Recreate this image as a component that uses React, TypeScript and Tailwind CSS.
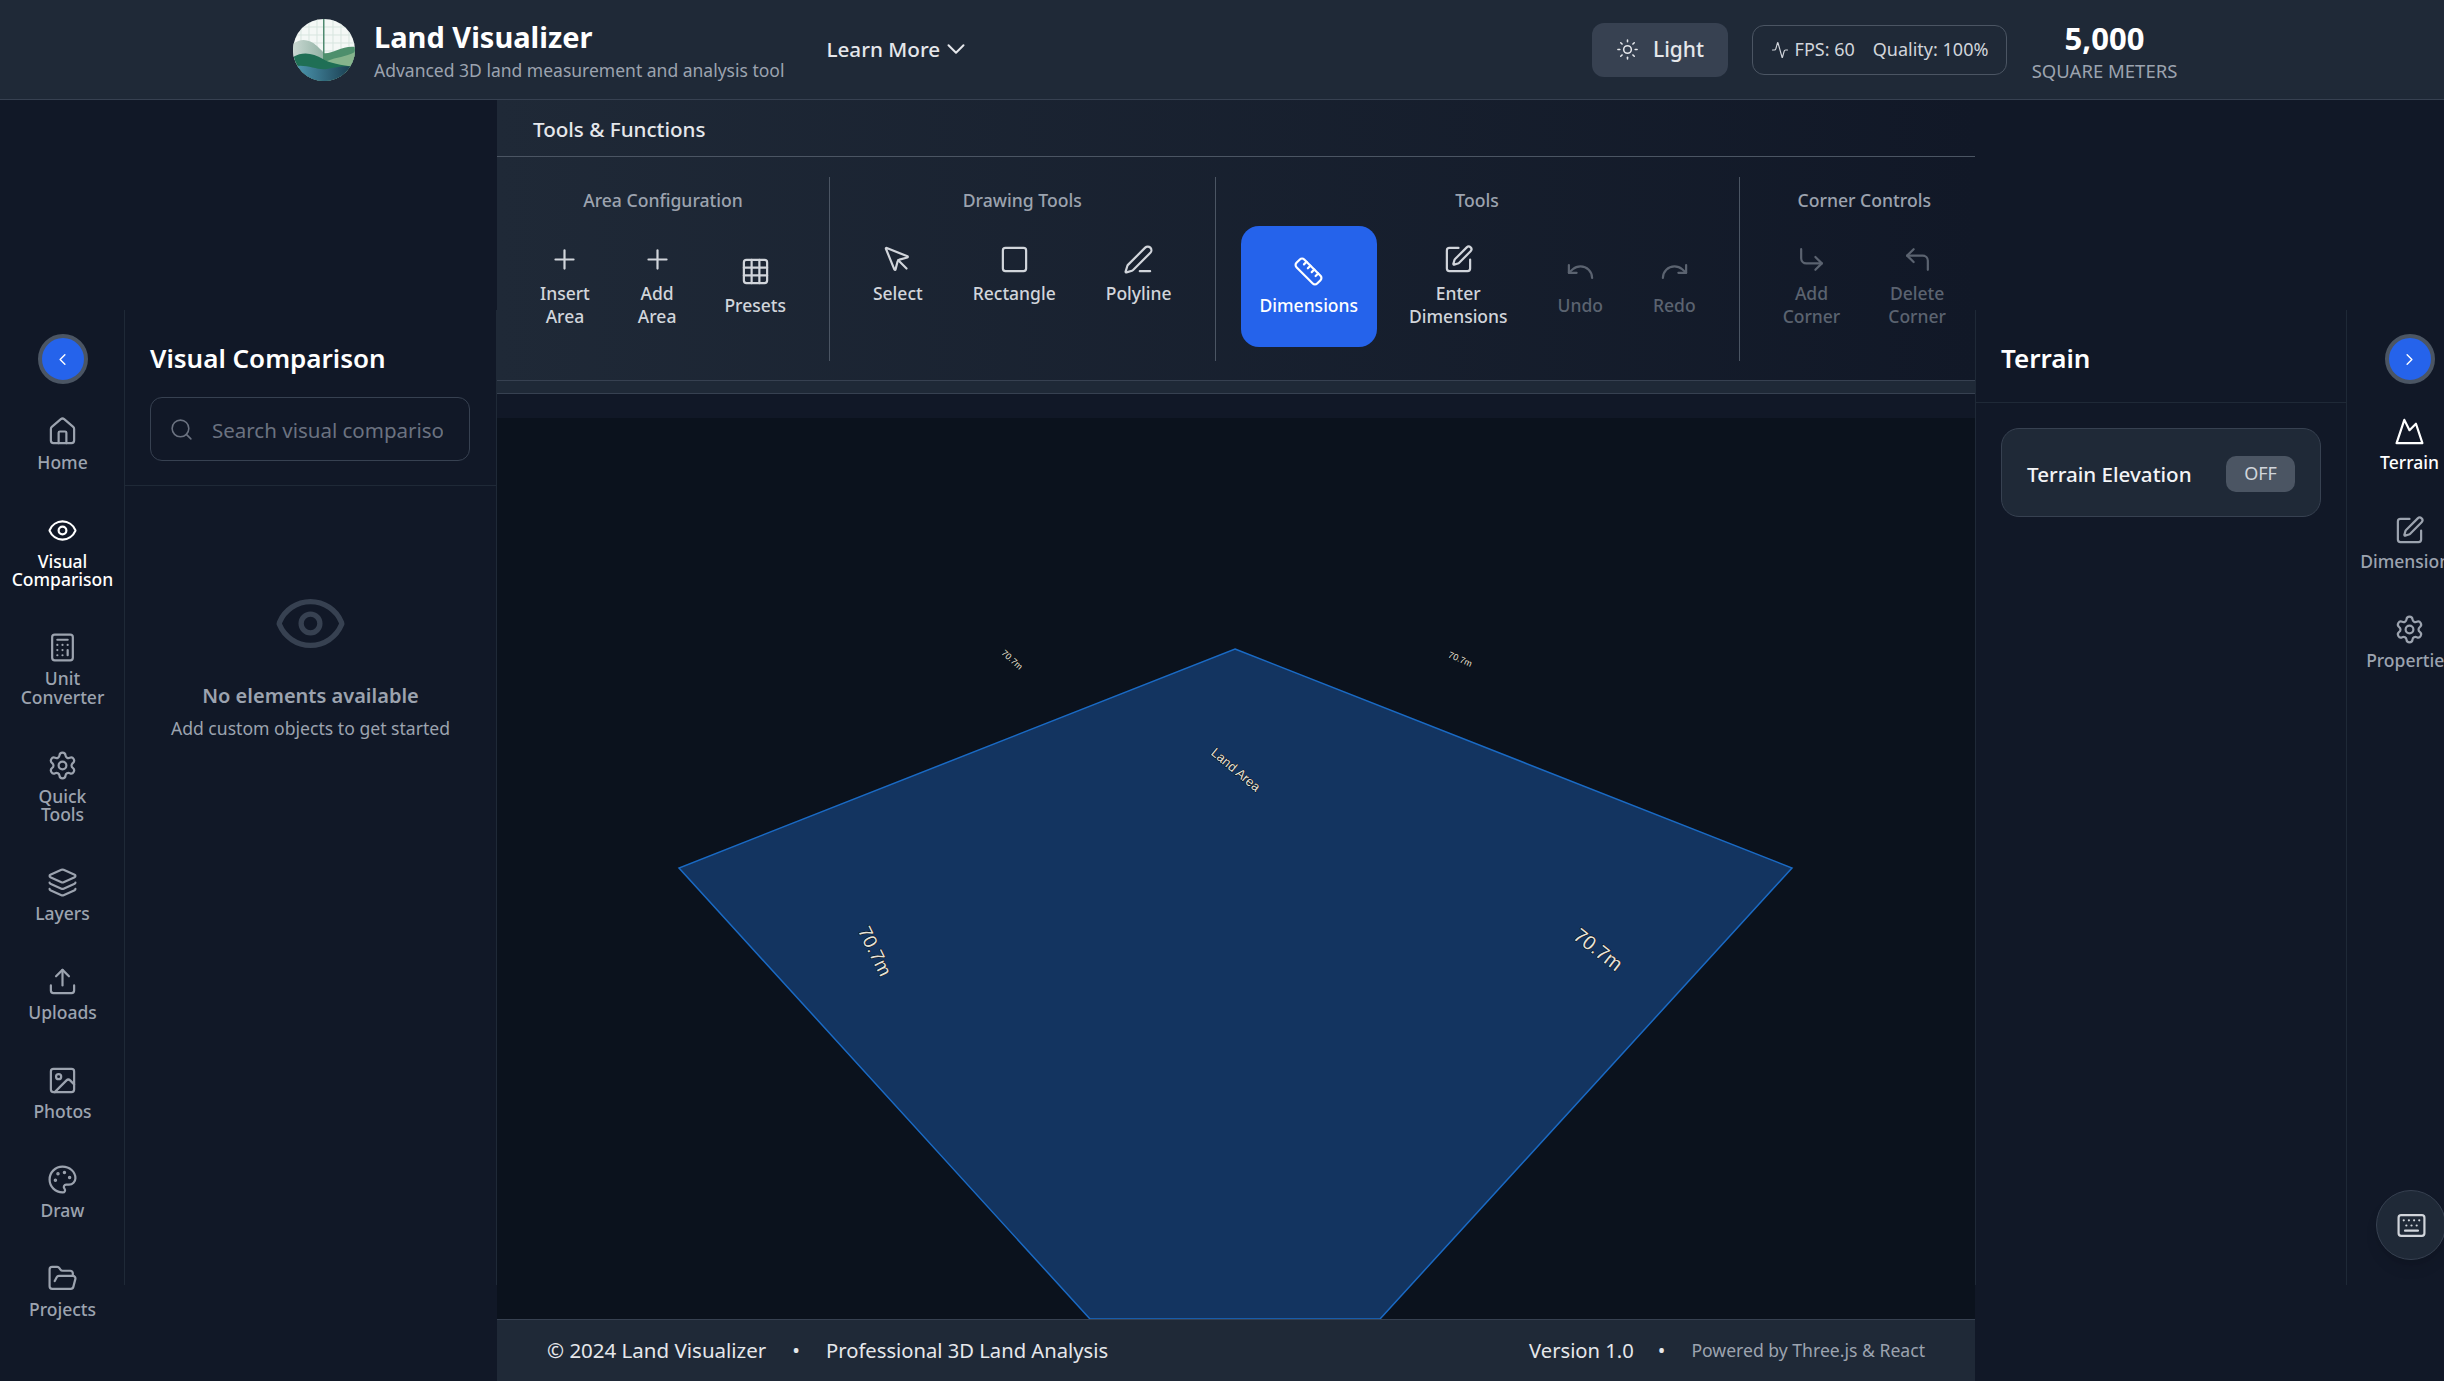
import {
  Activity,
  Calculator,
  ChevronDown,
  ChevronLeft,
  ChevronRight,
  CornerDownRight,
  CornerUpLeft,
  Eye,
  FolderOpen,
  Grid3x3,
  House,
  Image,
  Keyboard,
  Layers,
  Mountain,
  MousePointer,
  Palette,
  PenLine,
  Plus,
  Redo,
  Ruler,
  Search,
  Settings,
  Square,
  SquarePen,
  Sun,
  Undo,
  Upload,
} from "lucide-react";
import type { ComponentType } from "react";

type IconType = ComponentType<{ className?: string; size?: number; strokeWidth?: number }>;

interface RailItem {
  icon: IconType;
  lines: string[];
  active?: boolean;
}

interface ToolItem {
  icon: IconType;
  lines: string[];
  active?: boolean;
  disabled?: boolean;
  reserve?: boolean;
}

const leftRail: RailItem[] = [
  { icon: House, lines: ["Home"] },
  { icon: Eye, lines: ["Visual", "Comparison"], active: true },
  { icon: Calculator, lines: ["Unit", "Converter"] },
  { icon: Settings, lines: ["Quick", "Tools"] },
  { icon: Layers, lines: ["Layers"] },
  { icon: Upload, lines: ["Uploads"] },
  { icon: Image, lines: ["Photos"] },
  { icon: Palette, lines: ["Draw"] },
  { icon: FolderOpen, lines: ["Projects"] },
];

const rightRail: RailItem[] = [
  { icon: Mountain, lines: ["Terrain"], active: true },
  { icon: SquarePen, lines: ["Dimensions"] },
  { icon: Settings, lines: ["Properties"] },
];

const toolGroups: { title: string; gap: string; items: ToolItem[] }[] = [
  {
    title: "Area Configuration",
    gap: "gap-3",
    items: [
      { icon: Plus, lines: ["Insert", "Area"] },
      { icon: Plus, lines: ["Add", "Area"] },
      { icon: Grid3x3, lines: ["Presets"] },
    ],
  },
  {
    title: "Drawing Tools",
    gap: "gap-[14px]",
    items: [
      { icon: MousePointer, lines: ["Select"], reserve: true },
      { icon: Square, lines: ["Rectangle"], reserve: true },
      { icon: PenLine, lines: ["Polyline"], reserve: true },
    ],
  },
  {
    title: "Tools",
    gap: "gap-[14px]",
    items: [
      { icon: Ruler, lines: ["Dimensions"], active: true },
      { icon: SquarePen, lines: ["Enter", "Dimensions"] },
      { icon: Undo, lines: ["Undo"], disabled: true },
      { icon: Redo, lines: ["Redo"], disabled: true },
    ],
  },
  {
    title: "Corner Controls",
    gap: "gap-3",
    items: [
      { icon: CornerDownRight, lines: ["Add", "Corner"], disabled: true },
      { icon: CornerUpLeft, lines: ["Delete", "Corner"], disabled: true },
    ],
  },
];

function Logo() {
  return (
    <svg width="62" height="62" viewBox="0 0 62 62" className="shrink-0">
      <defs>
        <clipPath id="logoClip">
          <circle cx="31" cy="31" r="31" />
        </clipPath>
        <linearGradient id="logoBack" x1="0" x2="1">
          <stop offset="0" stopColor="#c9d8d2" />
          <stop offset="1" stopColor="#8fb0a2" />
        </linearGradient>
        <linearGradient id="logoWater" x1="0" x2="1">
          <stop offset="0" stopColor="#4f9cb5" />
          <stop offset="1" stopColor="#17384a" />
        </linearGradient>
      </defs>
      <g clipPath="url(#logoClip)">
        <rect width="62" height="62" fill="#f4f8f6" />
        <path
          d="M0 8H62M0 16H62M0 24H62M0 32H62M8 0V40M16 0V40M24 0V40M40 0V40M48 0V40M56 0V40"
          stroke="#d7e5df"
          strokeWidth="1"
        />
        <path d="M0 25C8 19 16 20 24 27C28 31 31 33 32 36L32 50H0Z" fill="url(#logoBack)" />
        <rect x="30" y="0" width="1.5" height="36" fill="#4f8a70" />
        <path d="M30 34C38 36 50 26 62 28V52H30Z" fill="#4d8f6c" />
        <path d="M34 42C44 38 52 38 62 33V54H34Z" fill="#86b48c" />
        <path d="M0 38C10 32 20 34 30 40C36 44 48 46 62 48V62H0Z" fill="#1f6f55" />
        <path d="M0 48C12 44 24 52 34 50C44 48 52 46 62 48V62H0Z" fill="url(#logoWater)" />
      </g>
    </svg>
  );
}

function Rail({ items }: { items: RailItem[] }) {
  return (
    <div className="flex flex-col items-center w-[125px] shrink-0 pt-6">
      <button className="w-[50px] h-[50px] rounded-full bg-[#2563eb] border-[4px] border-[#4b5563] flex items-center justify-center text-white">
        {items[0].lines[0] === "Home" ? (
          <ChevronLeft size={19} strokeWidth={1.8} />
        ) : (
          <ChevronRight size={19} strokeWidth={1.8} />
        )}
      </button>
      <div className="flex flex-col mt-[15.5px] gap-3 w-full">
        {items.map((item) => (
          <div
            key={item.lines.join(" ")}
            className={`flex flex-col items-center pt-4 pb-[15.5px] whitespace-nowrap ${
              item.active ? "text-white" : "text-[#9ca3af]"
            }`}
          >
            <item.icon size={31} strokeWidth={1.7} />
            <div className="mt-[6px] text-center text-[17.5px] leading-[18.5px] font-medium">
              {item.lines.map((line) => (
                <div key={line}>{line}</div>
              ))}
            </div>
          </div>
        ))}
      </div>
    </div>
  );
}

function ToolButton({ item }: { item: ToolItem }) {
  const color = item.active
    ? "bg-[#2563eb] text-white rounded-[18px] px-[19px]"
    : item.disabled
      ? "text-[#5b6370] px-[18px]"
      : "text-[#d1d5db] px-[18px]";
  return (
    <button className={`h-[121px] flex flex-col items-center justify-center shrink-0 ${color}`}>
      <item.icon size={31} strokeWidth={1.7} />
      <div
        className={`mt-[7px] text-[17.5px] leading-[23px] font-medium text-center whitespace-nowrap ${
          item.reserve ? "min-h-[46px]" : ""
        }`}
      >
        {item.lines.map((line) => (
          <div key={line}>{line}</div>
        ))}
      </div>
    </button>
  );
}

// the 3d scene, coordinates are canvas pixels
function Scene() {
  return (
    <svg width="1478" height="901" viewBox="0 0 1478 901" className="block">
      <polygon
        points="738,231 1295,450 883,901 593,901 182,450"
        fill="#133460"
        stroke="#1a6ac4"
        strokeWidth="1.5"
      />
      <g
        fill="#e5e2d8"
        stroke="#05080f"
        strokeWidth="1"
        paintOrder="stroke"
        fontFamily="Liberation Sans, sans-serif"
      >
        <text x="513" y="244" fontSize="9" textAnchor="middle" transform="rotate(42 513 244)">
          70.7m
        </text>
        <text x="962" y="244" fontSize="9" textAnchor="middle" transform="rotate(24 962 244)">
          70.7m
        </text>
        <text x="736" y="355" fontSize="13" textAnchor="middle" transform="rotate(40 736 355)">
          Land Area
        </text>
        <text x="372" y="536" fontSize="19" textAnchor="middle" transform="rotate(64 372 536)">
          70.7m
        </text>
        <text x="1097" y="537" fontSize="20" textAnchor="middle" transform="rotate(38 1097 537)">
          70.7m
        </text>
      </g>
    </svg>
  );
}

export default function App() {
  return (
    <div className="w-[2444px] h-[1381px] overflow-hidden relative flex flex-col bg-[#111827] text-white font-['Noto_Sans',sans-serif]">
      {/* header */}
      <header className="h-[100px] shrink-0 bg-[#1f2937] border-b border-[#374151] flex items-center justify-between pl-[293px] pr-[265.5px]">
        <div className="flex items-center">
          <Logo />
          <div className="ml-[19px] mt-[3px]">
            <div className="text-[29px] leading-[38px] font-bold text-white">Land Visualizer</div>
            <div className="text-[17.5px] leading-[28px] text-[#9ca3af]">
              Advanced 3D land measurement and analysis tool
            </div>
          </div>
          <div className="ml-[42px] flex items-center gap-[1px] text-[20.7px] font-medium text-[#e5e7eb]">
            Learn More
            <ChevronDown size={30} strokeWidth={1.6} />
          </div>
        </div>
        <div className="flex items-center">
          <button className="h-[54px] w-[136px] rounded-xl bg-[#374151] flex items-center justify-center gap-[14px] text-[21px] font-medium text-[#e5e7eb]">
            <Sun size={23} strokeWidth={1.6} />
            Light
          </button>
          <div className="ml-6 h-[50px] w-[255px] rounded-xl border border-[#4b5563] flex items-center justify-center gap-[18px] text-[18px] text-[#d1d5db]">
            <span className="flex items-center gap-[6px]">
              <Activity size={18} strokeWidth={1.6} />
              FPS: 60
            </span>
            <span>Quality: 100%</span>
          </div>
          <div className="ml-[23.5px] mt-[6px] w-[148px] text-center">
            <div className="text-[31px] leading-[37px] font-bold text-white">5,000</div>
            <div className="text-[18.5px] leading-[28px] text-[#9ca3af] whitespace-nowrap">SQUARE METERS</div>
          </div>
        </div>
      </header>

      <div className="flex-1 flex min-h-0">
        {/* left side */}
        <div className="w-[497px] shrink-0 pt-[210px]">
          <aside className="h-[975px] flex border-r border-[#1f2937]">
            <div className="border-r border-[#1f2937] w-[125px] shrink-0">
              <Rail items={leftRail} />
            </div>
            <div className="flex-1 min-w-0">
              <div className="border-b border-[#1f2937] h-[176px] px-[25px] pt-[26px]">
                <h2 className="text-[26px] leading-[44px] font-semibold text-white">Visual Comparison</h2>
                <div className="mt-[17px] h-[64px] w-[320px] rounded-xl border border-[#374151] flex items-center pl-[18px] pr-[26px] gap-[18px]">
                  <Search size={25} strokeWidth={1.5} className="text-[#6b7280] shrink-0" />
                  <span className="text-[20.5px] leading-[32px] pt-[1px] text-[#6b7280] overflow-hidden whitespace-nowrap">
                    Search visual comparison
                  </span>
                </div>
              </div>
              <div className="flex flex-col items-center pt-[100px]">
                <Eye size={75} strokeWidth={1.7} className="text-[#374151]" />
                <div className="mt-[20px] text-[20px] leading-[30px] font-semibold text-[#9ca3af]">
                  No elements available
                </div>
                <div className="mt-[3px] text-[17.6px] leading-[28px] text-[#9ca3af]">
                  Add custom objects to get started
                </div>
              </div>
            </div>
          </aside>
        </div>

        {/* center */}
        <main className="w-[1478px] shrink-0 flex flex-col">
          <section className="bg-gradient-to-r from-[#1f2937] to-[#111827]">
            <div className="h-[57px] border-b border-[#4b5563] flex items-center pl-[36px] pt-[2px] text-[20.6px] font-medium text-[#e5e7eb]">
              Tools &amp; Functions
            </div>
            <div className="h-[223px] flex items-center overflow-hidden">
              {toolGroups.map((group, i) => (
                <div
                  key={group.title}
                  className={`h-[184px] px-[25px] shrink-0 flex flex-col items-center ${
                    i < toolGroups.length - 1 ? "border-r border-[#4b5563]" : ""
                  }`}
                >
                  <div className="h-[49px] pt-[9px] text-[17.6px] leading-[28px] font-medium text-[#9ca3af] whitespace-nowrap">
                    {group.title}
                  </div>
                  <div className={`flex ${group.gap}`}>
                    {group.items.map((item) => (
                      <ToolButton key={item.lines.join(" ")} item={item} />
                    ))}
                  </div>
                </div>
              ))}
            </div>
          </section>
          <div className="h-[14px] shrink-0 bg-[#1f2937] border-y border-[#374151]" />
          <div className="h-[24px] shrink-0 bg-[#111827]" />
          <div className="h-[901px] shrink-0 bg-[#0b121d] overflow-hidden">
            <Scene />
          </div>
          <footer className="h-[62px] shrink-0 bg-[#1f2937] border-t border-[#374151] flex items-center justify-between px-[50px]">
            <div className="flex items-center gap-[26px] text-[20.5px] text-[#e5e7eb]">
              <span>© 2024 Land Visualizer</span>
              <span>•</span>
              <span className="text-[20.2px]">Professional 3D Land Analysis</span>
            </div>
            <div className="flex items-center text-[20.2px] text-[#e5e7eb]">
              <span>Version 1.0</span>
              <span className="ml-[24px]">•</span>
              <span className="ml-[26px] text-[17.6px] text-[#9ca3af]">Powered by Three.js &amp; React</span>
            </div>
          </footer>
        </main>

        {/* right side */}
        <div className="shrink-0 pt-[210px]">
          <aside className="h-[975px] flex border-l border-[#1f2937] w-[497px]">
            <div className="w-[371px] shrink-0 border-r border-[#1f2937]">
              <div className="h-[93px] border-b border-[#1f2937] px-[25px] pt-[26px]">
                <h2 className="text-[26px] leading-[44px] font-semibold text-white">Terrain</h2>
              </div>
              <div className="p-[25px]">
                <div className="h-[89px] rounded-[18px] bg-[#1f2937] border border-[#374151] flex items-center justify-between pl-[25px] pr-[25px]">
                  <span className="text-[20.6px] leading-[32px] pt-[3px] font-medium text-[#f3f4f6]">Terrain Elevation</span>
                  <span className="mt-[2px] w-[69px] h-[36px] rounded-[10px] bg-[#4b5563] flex items-center justify-center text-[18px] text-[#d1d5db]">
                    OFF
                  </span>
                </div>
              </div>
            </div>
            <Rail items={rightRail} />
          </aside>
        </div>
      </div>

      <button className="absolute left-[2376px] top-[1190px] w-[70px] h-[70px] rounded-full bg-[#1f2937] border border-[#374151] shadow-lg flex items-center justify-center text-[#d1d5db]">
        <Keyboard size={31} strokeWidth={1.7} />
      </button>
    </div>
  );
}
